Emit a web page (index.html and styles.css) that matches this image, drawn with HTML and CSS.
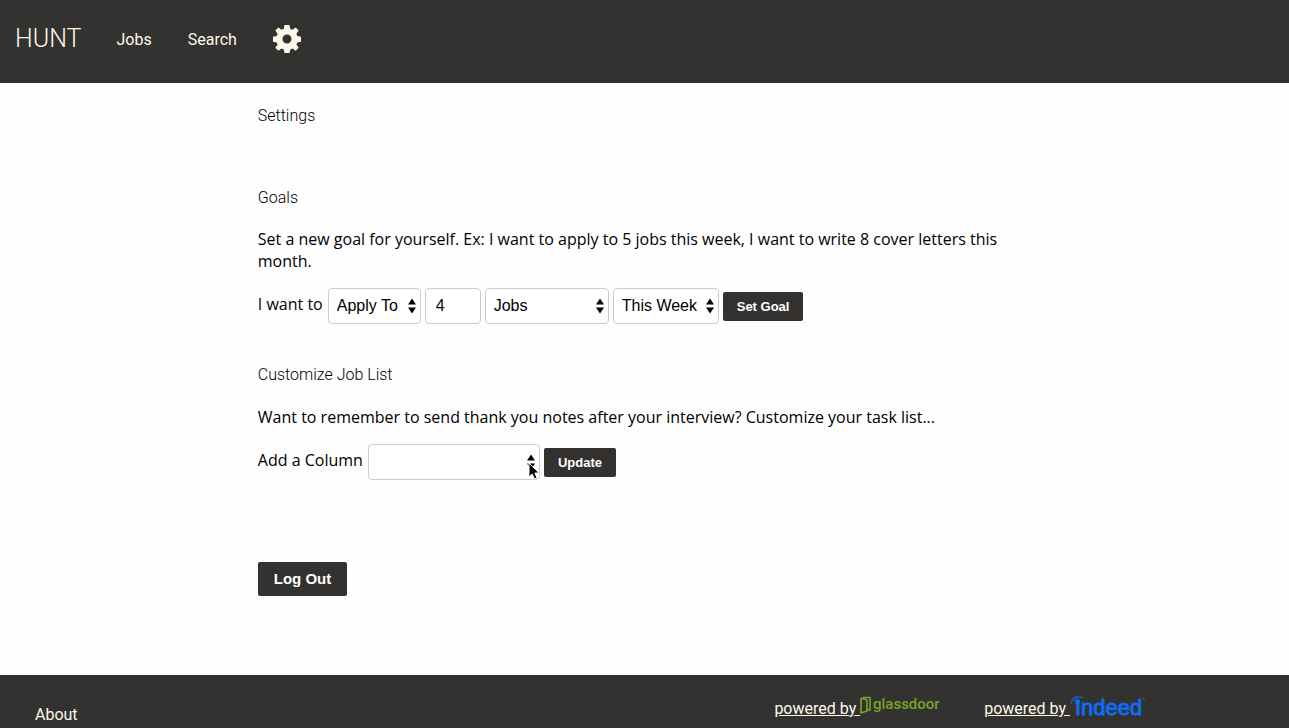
FILE: index.html
```
<!DOCTYPE html>
<html lang="en">
<head>
<meta charset="utf-8">
<title>Hunt</title>
<link rel="stylesheet" href="styles.css">
</head>
<body>
<svg width="0" height="0" class="sprite" aria-hidden="true">
  <symbol id="arrows" viewBox="0 0 8 16"><path d="M0 6.500 4 .5l4 6zM0 9.500h8l-4 6z"/></symbol>
</svg>
<header class="header">
  <a class="brand" href="#">HUNT</a>
  <nav class="nav">
    <a class="nav-link" href="#">Jobs</a>
    <a class="nav-link" href="#">Search</a>
    <a href="#" class="gear" aria-label="Settings">
      <svg width="28" height="28" viewBox="0 0 28 28"><path fill="#fbf9ea" fill-rule="evenodd" d="M11.500 0h5l.8 3.900 2.200.9 3.200-2.300 3 3-2.300 3.200.9 2.200 3.700.8v5l-3.700.7-.9 2.200 2.300 3.200-3 3-3.200-2.200-2.200.9-.8 3.500h-5l-.8-3.500-2.200-.9-3.200 2.200-3-3 2.300-3.200-.9-2.200L0 16.700v-5l3.700-.8.9-2.200-2.300-3.200 3-3 3.200 2.300 2.200-.9zM14 9.500a4.500 4.500 0 1 0 0 9 4.500 4.500 0 0 0 0-9z"/></svg>
    </a>
  </nav>
</header>
<main class="main">
  <h1 class="title">Settings</h1>
  <section class="section goals">
    <h2 class="title">Goals</h2>
    <p class="text">Set a new goal for yourself. Ex: I want to apply to 5 jobs this week, I want to write 8 cover letters this month.</p>
    <form class="row">
      <label for="action">I want to</label>
      <span class="picker action"><select id="action"><option>Apply To</option></select><svg><use href="#arrows"/></svg></span>
      <input class="count" type="text" value="4" aria-label="Amount">
      <span class="picker thing"><select aria-label="Item"><option>Jobs</option></select><svg><use href="#arrows"/></svg></span>
      <span class="picker period"><select aria-label="Period"><option>This Week</option></select><svg><use href="#arrows"/></svg></span>
      <button class="button" type="button">Set Goal</button>
    </form>
  </section>
  <section class="section customize">
    <h2 class="title">Customize Job List</h2>
    <p class="text">Want to remember to send thank you notes after your interview? Customize your task list...</p>
    <form class="row">
      <label for="column">Add a Column</label>
      <span class="picker column"><select id="column"><option></option></select><svg><use href="#arrows"/></svg>
        <svg class="pointer" viewBox="0 0 12 18"><path d="M1 1v14l3.200-3 2.300 5 2.600-1.200L6.900 11h4.300z" fill="#000" stroke="#fff"/></svg></span>
      <button class="button" type="button">Update</button>
    </form>
  </section>
  <button class="button logout" type="button">Log Out</button>
</main>
<footer class="footer">
  <a class="about" href="#">About</a>
  <a class="credit" href="#"><span class="powered">powered by&nbsp;</span><svg class="glassdoor" width="80" height="24" viewBox="0 0 80 24"><path d="M1 3v15l6-2V5L1 3M3 2.500h7V15H7" fill="none" stroke="#75a428" stroke-width="1.600"/><text x="13" y="14">glassdoor</text></svg></a>
  <a class="credit indeed-link" href="#"><span class="powered">powered by&nbsp;</span><svg class="indeed" width="76" height="24" viewBox="0 0 76 24"><path d="M1 9C2 2 7 0 13 3 8 1 3 3 1 9z" fill="#0f6cf0" stroke="#0f6cf0" stroke-width=".6"/><circle cx="7.500" cy="6.500" r="2.500" fill="#0f6cf0"/><text x="5" y="20">ındeed</text><circle cx="74" cy="4" r="1" fill="#555"/></svg></a>
</footer>
</body>
</html>
```
FILE: styles.css
```
* { box-sizing: border-box; }
body {
  margin: 0;
  min-height: 100vh;
  display: flex;
  flex-direction: column;
  background: #fefefe;
  color: #000;
  font: 16px/22px "Open Sans", sans-serif;
}
.sprite { position: absolute; }
.header {
  display: flex;
  align-items: center;
  gap: 35px;
  padding: 25px 15px 30px;
  background: #343230;
  font-family: Roboto, sans-serif;
}
.header a { color: #fbf9ea; text-decoration: none; }
.header .brand { font-size: 25px; font-weight: 300; line-height: 28px; }
.nav { display: flex; align-items: center; gap: 36px; }
.nav-link { padding-top: 2px; }
.gear svg { display: block; }
.main { width: 60%; margin: 0 auto; padding: 22px 0 79px; }
.title { margin: 0; font: 300 16px/22px Roboto, sans-serif; }
.goals { margin-top: 60px; }
.customize { margin-top: 40px; }
.text { margin: 19px 0 16px; }
.customize .text { margin-top: 20px; }
.row { display: flex; align-items: center; gap: 4px; }
.row label { margin: 0 1px 4px 0; }
.picker { position: relative; height: 36px; }
.picker select, .count {
  width: 100%;
  height: 36px;
  border: 1px solid #ccc;
  border-radius: 4px;
  background: #fff;
  color: #000;
  font: 16px "Liberation Sans", sans-serif;
}
.picker select { appearance: none; padding: 0 8px 2px; }
.picker svg { position: absolute; right: 5px; top: 10px; width: 8px; height: 16px; pointer-events: none; }
.picker .pointer { right: 0; top: 18px; width: 12px; height: 18px; }
.action { width: 93px; }
.picker + .count { width: 56px; padding: 0 10px; }
.thing { width: 124px; }
.period { width: 106px; }
.column { width: 172px; }
.button {
  padding: 6px 14px;
  border: 0;
  border-radius: 2px;
  background: #343230;
  color: #fff;
  font: bold 13px/17px "Liberation Sans", sans-serif;
}
.logout { display: block; margin-top: 82px; padding: 8px 16px; font-size: 15px; line-height: 18px; }
.footer {
  flex: 1;
  display: flex;
  align-items: flex-start;
  padding: 20px 143px 0 35px;
  background: #343230;
  font-family: Roboto, sans-serif;
}
.footer a { color: #fbf9ea; text-decoration: none; }
.about { padding-top: 9px; }
.credit { display: flex; margin-left: auto; }
.footer .indeed-link { margin-left: 44px; }
.powered { padding-top: 3px; text-decoration: underline; }
.glassdoor text { font: 500 15px Roboto, sans-serif; fill: #75a428; }
.indeed text { font: 22px "Liberation Sans", sans-serif; fill: #0f6cf0; stroke: #0f6cf0; stroke-width: 1px; }
```
